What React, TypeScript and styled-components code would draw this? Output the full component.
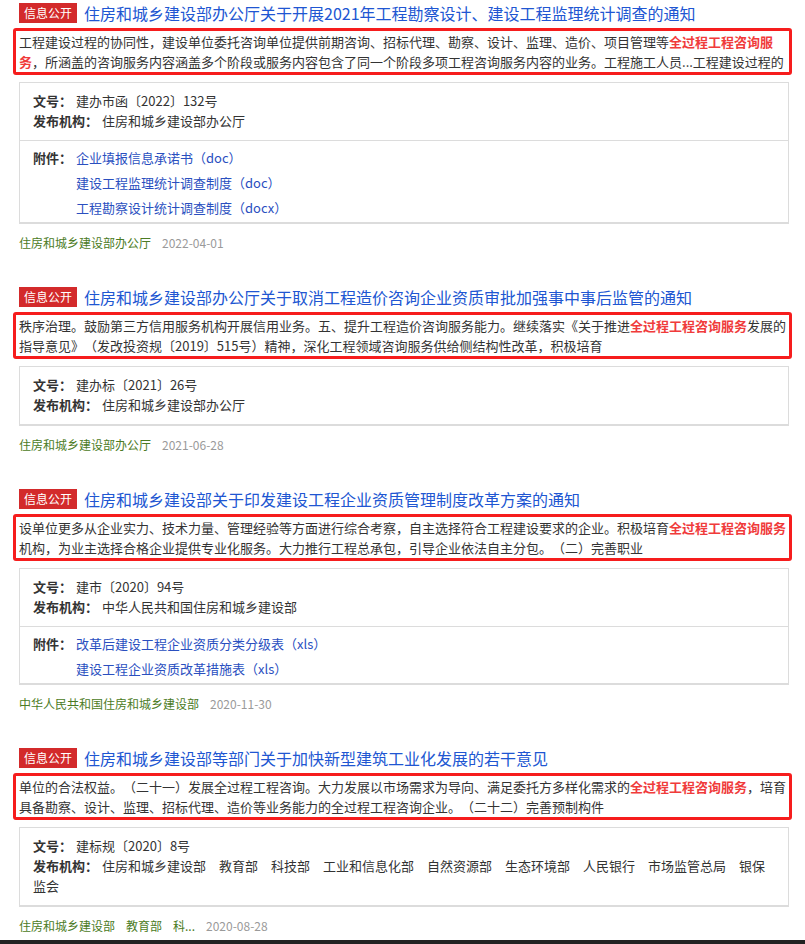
import React from "react";
import styled, { createGlobalStyle } from "styled-components";

const GlobalStyle = createGlobalStyle`
  body {
    margin: 0;
    background: #fff;
    color: #333;
    font-family: "Noto Sans CJK SC", "Noto Sans", sans-serif;
    text-spacing-trim: space-all;
  }
`;

type Piece = { text: string; hl?: boolean };

interface Notice {
  title: string;
  snippet: Piece[];
  docNo: string;
  orgs: string[];
  attachments: string[];
  footerOrgs: string[];
  date: string;
}

const HL = "全过程工程咨询服务";

const notices: Notice[] = [
  {
    title: "住房和城乡建设部办公厅关于开展2021年工程勘察设计、建设工程监理统计调查的通知",
    snippet: [
      { text: "工程建设过程的协同性，建设单位委托咨询单位提供前期咨询、招标代理、勘察、设计、监理、造价、项目管理等" },
      { text: HL, hl: true },
      { text: "，所涵盖的咨询服务内容涵盖多个阶段或服务内容包含了同一个阶段多项工程咨询服务内容的业务。工程施工人员...工程建设过程的" },
    ],
    docNo: "建办市函〔2022〕132号",
    orgs: ["住房和城乡建设部办公厅"],
    attachments: [
      "企业填报信息承诺书（doc）",
      "建设工程监理统计调查制度（doc）",
      "工程勘察设计统计调查制度（docx）",
    ],
    footerOrgs: ["住房和城乡建设部办公厅"],
    date: "2022-04-01",
  },
  {
    title: "住房和城乡建设部办公厅关于取消工程造价咨询企业资质审批加强事中事后监管的通知",
    snippet: [
      { text: "秩序治理。鼓励第三方信用服务机构开展信用业务。五、提升工程造价咨询服务能力。继续落实《关于推进" },
      { text: HL, hl: true },
      { text: "发展的指导意见》（发改投资规〔2019〕515号）精神，深化工程领域咨询服务供给侧结构性改革，积极培育" },
    ],
    docNo: "建办标〔2021〕26号",
    orgs: ["住房和城乡建设部办公厅"],
    attachments: [],
    footerOrgs: ["住房和城乡建设部办公厅"],
    date: "2021-06-28",
  },
  {
    title: "住房和城乡建设部关于印发建设工程企业资质管理制度改革方案的通知",
    snippet: [
      { text: "设单位更多从企业实力、技术力量、管理经验等方面进行综合考察，自主选择符合工程建设要求的企业。积极培育" },
      { text: HL, hl: true },
      { text: "机构，为业主选择合格企业提供专业化服务。大力推行工程总承包，引导企业依法自主分包。（二）完善职业" },
    ],
    docNo: "建市〔2020〕94号",
    orgs: ["中华人民共和国住房和城乡建设部"],
    attachments: ["改革后建设工程企业资质分类分级表（xls）", "建设工程企业资质改革措施表（xls）"],
    footerOrgs: ["中华人民共和国住房和城乡建设部"],
    date: "2020-11-30",
  },
  {
    title: "住房和城乡建设部等部门关于加快新型建筑工业化发展的若干意见",
    snippet: [
      { text: "单位的合法权益。（二十一）发展全过程工程咨询。大力发展以市场需求为导向、满足委托方多样化需求的" },
      { text: HL, hl: true },
      { text: "，培育具备勘察、设计、监理、招标代理、造价等业务能力的全过程工程咨询企业。（二十二）完善预制构件" },
    ],
    docNo: "建标规〔2020〕8号",
    orgs: [
      "住房和城乡建设部",
      "教育部",
      "科技部",
      "工业和信息化部",
      "自然资源部",
      "生态环境部",
      "人民银行",
      "市场监管总局",
      "银保监会",
    ],
    attachments: [],
    footerOrgs: ["住房和城乡建设部", "教育部", "科..."],
    date: "2020-08-28",
  },
];

export default function App() {
  return (
    <Page>
      <GlobalStyle />
      <List>
        {notices.map((n, i) => (
          <NoticeItem key={i} notice={n} />
        ))}
      </List>
      <BottomBar />
    </Page>
  );
}

function NoticeItem({ notice }: { notice: Notice }) {
  return (
    <Item>
      <TitleRow>
        <Tag>信息公开</Tag>
        <Title href="#">{notice.title}</Title>
      </TitleRow>

      <Snippet>
        {notice.snippet.map((p, i) => (p.hl ? <Mark key={i}>{p.text}</Mark> : <span key={i}>{p.text}</span>))}
      </Snippet>

      <InfoBox>
        <MetaSection>
          <Field>
            <Label>文号：</Label>
            {notice.docNo}
          </Field>
          <Field>
            <Label>发布机构：</Label>
            {/* orgs are separated by a full-width space, as on the site */}
            {notice.orgs.join("　")}
          </Field>
        </MetaSection>

        {notice.attachments.length > 0 && (
          <AttachSection>
            <Label>附件：</Label>
            <AttachList>
              {notice.attachments.map((a, i) => (
                <AttachLink key={i} href="#">{a}</AttachLink>
              ))}
            </AttachList>
          </AttachSection>
        )}
      </InfoBox>

      <Footer>
        {notice.footerOrgs.map((o, i) => (
          <Source key={i}>{o}</Source>
        ))}
        <DateText>{notice.date}</DateText>
      </Footer>
    </Item>
  );
}

const Page = styled.div`
  width: 805px;
  padding-top: 3px;
`;

const List = styled.div`
  width: 770px;
  margin-left: 19px;
`;

const Item = styled.article`
  & + & {
    margin-top: 34px;
  }
`;

const TitleRow = styled.div`
  display: flex;
  align-items: center;
  gap: 7px;
  height: 20px;
`;

const Tag = styled.span`
  flex: none;
  height: 20px;
  padding: 0 5px;
  background: #d32a2b;
  color: #fff;
  font-size: 12px;
  line-height: 20px;
`;

const Title = styled.a`
  color: #2056d2;
  font-size: 16px;
  line-height: 20px;
  text-decoration: none;
  white-space: nowrap;
`;

const Snippet = styled.p`
  margin: 5px -3px 0 -6px;
  padding: 1px 0 0 3px;
  border: 3px solid #f61d1d;
  border-radius: 3px;
  font-size: 13px;
  line-height: 20px;
  max-height: 41px;
  overflow: hidden;
  color: #333;
`;

const Mark = styled.span`
  color: #f03b3b;
  font-weight: bold;
`;

const InfoBox = styled.div`
  margin-top: 7px;
  border: 1px solid #dcdcdc;
  border-bottom-width: 2px;
`;

const MetaSection = styled.div`
  padding: 8px 13px 9px;
`;

const Field = styled.div`
  font-size: 13px;
  line-height: 20px;
  color: #333;
`;

const Label = styled.span`
  flex: none;
  margin-right: 4px;
  font-weight: bold;
  color: #333;
`;

const AttachSection = styled.div`
  display: flex;
  align-items: flex-start;
  padding: 4px 13px 2px;
  border-top: 1px solid #dcdcdc;
  font-size: 13px;
  line-height: 25px;
`;

const AttachList = styled.div`
  display: flex;
  flex-direction: column;
`;

const AttachLink = styled.a`
  color: #2a4fbf;
  text-decoration: none;
`;

const Footer = styled.div`
  display: flex;
  gap: 11px;
  margin-top: 9px;
  font-size: 12px;
  line-height: 20px;
`;

const Source = styled.span`
  color: #4b7b24;
`;

const DateText = styled.span`
  color: #9a9a9a;
`;

const BottomBar = styled.div`
  margin-top: 4px;
  height: 30px;
  background: #222;
`;
